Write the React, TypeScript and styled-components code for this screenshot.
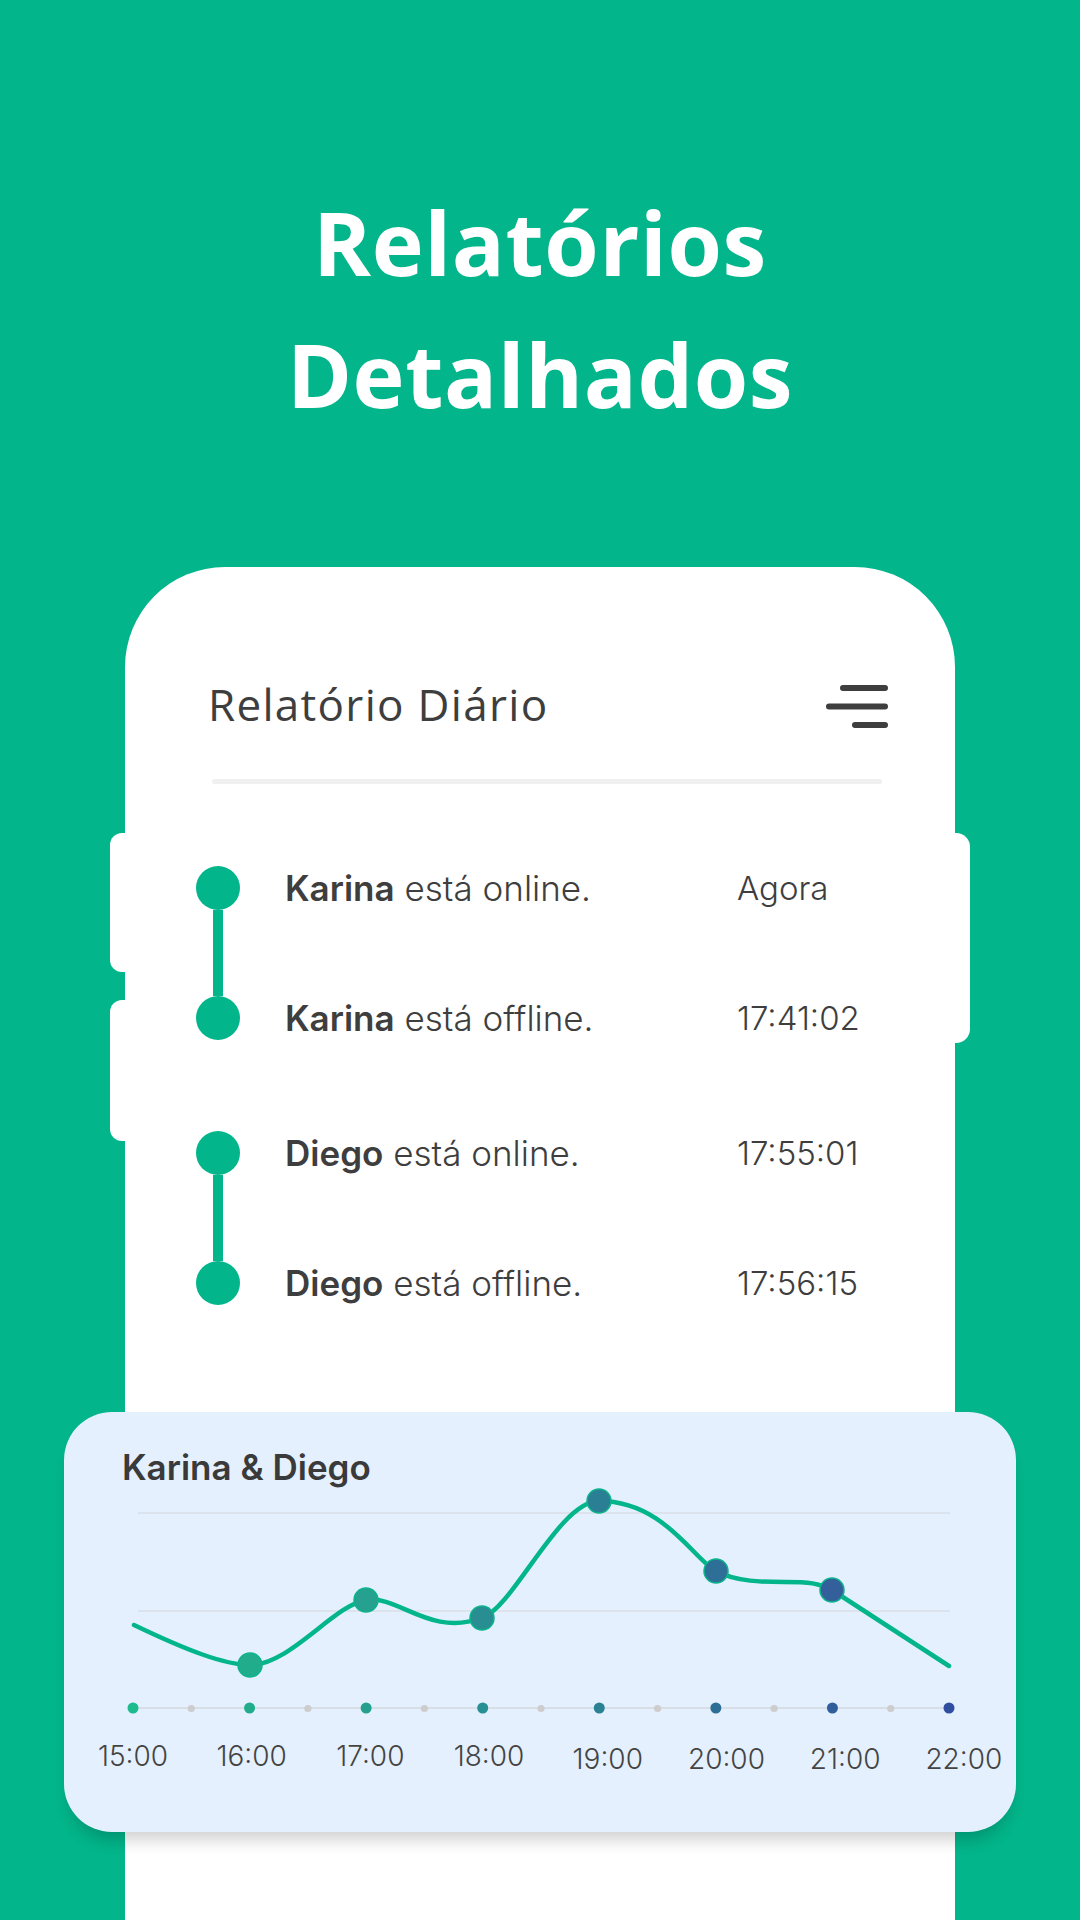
import React from "react";
import styled, { createGlobalStyle } from "styled-components";

const GREEN = "#03B58A";
const INK = "#3E3E3E";

const GlobalStyle = createGlobalStyle`
  html, body { margin: 0; padding: 0; }
  body { background: ${GREEN}; width: 1080px; height: 1920px; overflow: hidden; }
  #root { width: 1080px; height: 1920px; }
  * { box-sizing: border-box; }
`;

const Page = styled.div`
  width: 1080px;
  height: 1920px;
  background: ${GREEN};
  display: flex;
  flex-direction: column;
  align-items: center;
  overflow: hidden;
`;

const Title = styled.h1`
  margin: 176px 0 0;
  font-family: "Open Sans", "Noto Sans", sans-serif;
  font-weight: 700;
  font-size: 88px;
  line-height: 132px;
  letter-spacing: 0.6px;
  color: #ffffff;
  text-align: center;
`;

const PhoneRow = styled.div`
  margin-top: 127px;
  display: flex;
  align-items: flex-start;
`;

const KeyColumn = styled.div`
  width: 15px;
  margin-top: 266px;
  display: flex;
  flex-direction: column;
  gap: 28px;
`;

const Key = styled.div<{ $h: number; $side: "left" | "right" }>`
  width: 15px;
  height: ${(p) => p.$h}px;
  background: #ffffff;
  border-radius: ${(p) => (p.$side === "left" ? "12px 0 0 12px" : "0 14px 14px 0")};
`;

const Phone = styled.div`
  width: 830px;
  height: 1353px;
  background: #ffffff;
  border-radius: 100px 100px 0 0;
  padding-top: 107px;
  display: flex;
  flex-direction: column;
`;

const Header = styled.div`
  height: 60px;
  padding: 0 67px 0 83px;
  display: flex;
  align-items: center;
  justify-content: space-between;
`;

const HeaderTitle = styled.h2`
  margin: 0;
  font-family: "Open Sans", "Noto Sans", sans-serif;
  font-weight: 400;
  font-size: 44px;
  line-height: 60px;
  letter-spacing: 1.3px;
  color: ${INK};
`;

const MenuIcon = styled.svg`
  display: block;
  margin-top: 6px;
`;

const Divider = styled.div`
  margin: 45px 0 0 87px;
  width: 670px;
  height: 5px;
  border-radius: 3px;
  background: #f0f0f0;
`;

const Timeline = styled.div`
  margin: 39px 0 0 71px;
  display: flex;
  flex-direction: column;
  gap: 5px;
`;

const Group = styled.div`
  display: flex;
  gap: 45px;
`;

const Rail = styled.div`
  width: 44px;
  padding: 43px 0;
  display: flex;
  flex-direction: column;
  align-items: center;
`;

const Dot = styled.div`
  width: 44px;
  height: 44px;
  border-radius: 50%;
  background: ${GREEN};
`;

const Connector = styled.div`
  width: 10px;
  height: 86px;
  background: ${GREEN};
`;

const Entries = styled.div`
  display: flex;
  flex-direction: column;
`;

const Entry = styled.div`
  height: 130px;
  display: grid;
  grid-template-columns: 452px auto;
  align-items: center;
`;

const Message = styled.div`
  font-family: Inter, "Noto Sans", sans-serif;
  font-weight: 300;
  font-size: 35px;
  line-height: 44px;
  color: ${INK};
  b {
    font-weight: 600;
  }
`;

const Time = styled.div`
  font-family: Inter, "Noto Sans", sans-serif;
  font-weight: 300;
  font-size: 33px;
  line-height: 44px;
  color: ${INK};
`;

const ChartCard = styled.div`
  margin: 64px -61px 0;
  height: 420px;
  background: #e4f0fd;
  border-radius: 48px;
  box-shadow: 0 14px 16px -6px rgba(0, 0, 0, 0.18);
  padding: 35px 0 59px;
  display: flex;
  flex-direction: column;
`;

const ChartTitle = styled.h3`
  margin: 0 0 0 58px;
  font-family: Inter, "Noto Sans", sans-serif;
  font-weight: 600;
  font-size: 35px;
  line-height: 40px;
  color: #3a3a3a;
`;

const ChartSvg = styled.svg`
  display: block;
  flex: none;
`;

const Labels = styled.div`
  margin-top: 20px;
  padding-left: 9.6px;
  display: grid;
  grid-template-columns: repeat(8, 118.71px);
`;

const Label = styled.div<{ $low?: boolean }>`
  padding-top: ${(p) => (p.$low ? 3 : 0)}px;
  text-align: center;
  font-family: Inter, "Noto Sans", sans-serif;
  font-weight: 300;
  font-size: 28px;
  line-height: 34px;
  color: #444444;
`;

const events = [
  [
    { name: "Karina", text: "está online.", time: "Agora" },
    { name: "Karina", text: "está offline.", time: "17:41:02" },
  ],
  [
    { name: "Diego", text: "está online.", time: "17:55:01" },
    { name: "Diego", text: "está offline.", time: "17:56:15" },
  ],
];

const hours = ["15:00", "16:00", "17:00", "18:00", "19:00", "20:00", "21:00", "22:00"];
const axisColors = ["#1DBB8D", "#21AD8B", "#25A08F", "#288F92", "#2A8194", "#2D6E96", "#305F9C", "#2F4E9F"];
const axisX = (i: number) => 69 + i * 116.57;

const points = [
  { x: 186, y: 178, c: "#21AD8B" },
  { x: 302, y: 113, c: "#26A08F" },
  { x: 418, y: 131, c: "#288E92" },
  { x: 535, y: 14, c: "#2A7F94" },
  { x: 652, y: 84, c: "#2E6F98" },
  { x: 768, y: 103, c: "#33609B" },
];

const curve =
  "M70,138 C120,162 160,178 186,178 C226,178 270,118 302,113 C335,108 365,150 418,131 " +
  "C450,120 495,14 535,14 C600,14 630,73 652,84 C672,95 700,95 720,95 C745,95 755,96 768,103 L885,179";

export default function App() {
  return (
    <>
      <GlobalStyle />
      <Page>
        <Title>
          Relatórios
          <br />
          Detalhados
        </Title>
        <PhoneRow>
          <KeyColumn>
            <Key $side="left" $h={139} />
            <Key $side="left" $h={141} />
          </KeyColumn>
          <Phone>
            <Header>
              <HeaderTitle>Relatório Diário</HeaderTitle>
              <MenuIcon width="62" height="44" viewBox="0 0 62 44">
                <g stroke="#3E3E3E" strokeWidth="6" strokeLinecap="round">
                  <line x1="17" y1="3" x2="59" y2="3" />
                  <line x1="3" y1="21.5" x2="59" y2="21.5" />
                  <line x1="29" y1="40" x2="59" y2="40" />
                </g>
              </MenuIcon>
            </Header>
            <Divider />
            <Timeline>
              {events.map((group, gi) => (
                <Group key={gi}>
                  <Rail>
                    <Dot />
                    <Connector />
                    <Dot />
                  </Rail>
                  <Entries>
                    {group.map((e, i) => (
                      <Entry key={i}>
                        <Message>
                          <b>{e.name}</b> {e.text}
                        </Message>
                        <Time>{e.time}</Time>
                      </Entry>
                    ))}
                  </Entries>
                </Group>
              ))}
            </Timeline>
            <ChartCard>
              <ChartTitle>Karina &amp; Diego</ChartTitle>
              <ChartSvg width="952" height="232" viewBox="0 0 952 232">
                <line x1="74" y1="26" x2="886" y2="26" stroke="#DCE3EC" strokeWidth="2" />
                <line x1="74" y1="124" x2="886" y2="124" stroke="#DCE3EC" strokeWidth="2" />
                <line x1="69" y1="221" x2="885" y2="221" stroke="#D5D9DE" strokeWidth="1.5" />
                {hours.slice(0, 7).map((_, i) => (
                  <circle key={"g" + i} cx={axisX(i) + 58.3} cy="221.5" r="3.6" fill="#CDCDCD" />
                ))}
                {axisColors.map((c, i) => (
                  <circle key={"a" + i} cx={axisX(i)} cy="221" r="5.5" fill={c} />
                ))}
                <path d={curve} fill="none" stroke={GREEN} strokeWidth="4.5" strokeLinecap="round" strokeLinejoin="round" />
                {points.map((p, i) => (
                  <circle key={"p" + i} cx={p.x} cy={p.y} r="12" fill={p.c} stroke="#0CB58B" strokeWidth="1.5" />
                ))}
              </ChartSvg>
              <Labels>
                {hours.map((h, i) => (
                  <Label key={h} $low={i >= 4}>
                    {h}
                  </Label>
                ))}
              </Labels>
            </ChartCard>
          </Phone>
          <KeyColumn>
            <Key $side="right" $h={210} />
          </KeyColumn>
        </PhoneRow>
      </Page>
    </>
  );
}
